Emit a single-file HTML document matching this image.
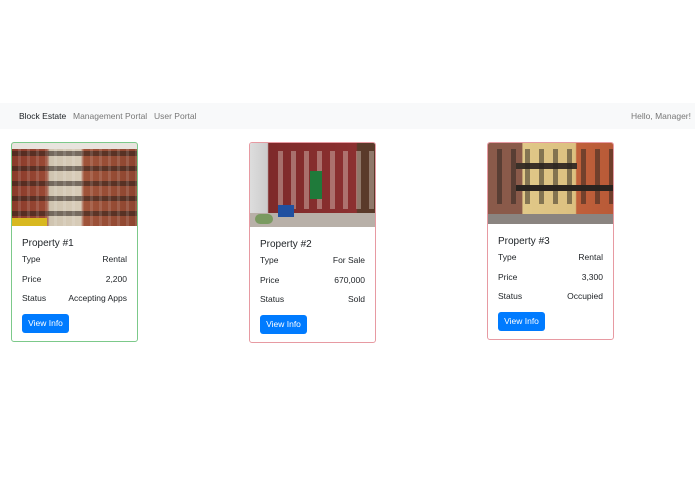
<!DOCTYPE html>
<html><head><style>
*{margin:0;padding:0;box-sizing:border-box}
body{width:695px;height:494px;background:#fff;font-family:"Liberation Sans",sans-serif;position:relative;overflow:hidden;color:#212529}
.nav{position:absolute;top:103px;left:0;width:695px;height:26px;background:#f8f9fa;font-size:8.5px;line-height:26px}
.nav span{position:absolute;top:0}
.card{position:absolute;top:142px;width:127px;border:1px solid;border-radius:3px;background:#fff;overflow:hidden}
.img{height:83px;position:relative;overflow:hidden}
.body{padding:0 10px}
.t{font-size:10px;margin-top:10px;height:14px;line-height:16px}
.r{display:flex;justify-content:space-between;font-size:8.5px;height:19.5px;line-height:19.5px}
.btn{display:inline-block;background:#007bff;color:#fff;font-size:8.5px;border-radius:3px;width:47px;height:19px;line-height:19px;text-align:center;margin:5px 0 8px;vertical-align:top}
</style></head><body>
<div class="nav">
<span style="left:19px;color:#212529">Block Estate</span>
<span style="left:73px;color:#777">Management Portal</span>
<span style="left:154px;color:#777">User Portal</span>
<span style="left:631px;color:#777">Hello, Manager!</span>
</div>

<div class="card" style="left:11px;border-color:#7cc98a">
<div class="img" style="background:linear-gradient(90deg,#8a3a2a 0,#9a4a35 28%,#cfc4b0 30%,#d8ccb8 55%,#a0543a 57%,#8d4530 100%)">
<div style="position:absolute;inset:0;background:repeating-linear-gradient(0deg,transparent 0 10px,rgba(40,30,25,.55) 10px 15px)"></div>
<div style="position:absolute;inset:0;background:repeating-linear-gradient(90deg,transparent 0 6px,rgba(255,255,255,.12) 6px 9px)"></div>
<div style="position:absolute;left:0;bottom:0;width:35px;height:8px;background:#d8b820"></div>
<div style="position:absolute;left:0;top:0;width:125px;height:6px;background:#e8e4de"></div>
</div>
<div class="body">
<div class="t">Property #1</div>
<div class="r"><span>Type</span><span>Rental</span></div>
<div class="r"><span>Price</span><span>2,200</span></div>
<div class="r"><span>Status</span><span>Accepting Apps</span></div>
<div class="btn">View Info</div>
</div></div>

<div class="card" style="left:249px;border-color:#e79aa2">
<div class="img" style="height:84px;background:linear-gradient(90deg,#ddd 0,#ccc 14%,#7e2a2a 15%,#8c3030 85%,#5a3a2a 86%)">
<div style="position:absolute;inset:0 0 18px 20px;background:repeating-linear-gradient(90deg,transparent 0 8px,rgba(230,220,210,.55) 8px 13px);opacity:.7;top:8px"></div>
<div style="position:absolute;left:60px;top:28px;width:12px;height:28px;background:#1f7a3a"></div>
<div style="position:absolute;left:0;bottom:0;width:125px;height:14px;background:#b8b0a8"></div>
<div style="position:absolute;left:28px;bottom:10px;width:16px;height:12px;background:#2050a0"></div>
<div style="position:absolute;left:5px;bottom:3px;width:18px;height:10px;background:#7a9a60;border-radius:5px"></div>
</div>
<div class="body">
<div class="t">Property #2</div>
<div class="r"><span>Type</span><span>For Sale</span></div>
<div class="r"><span>Price</span><span>670,000</span></div>
<div class="r"><span>Status</span><span>Sold</span></div>
<div class="btn">View Info</div>
</div></div>

<div class="card" style="left:487px;border-color:#e79aa2">
<div class="img" style="height:81px;background:linear-gradient(90deg,#8a5a4a 0,#8a5a4a 27%,#e0c888 28%,#dcc080 70%,#c0603a 71%,#b85a38 100%)">
<div style="position:absolute;left:28px;right:36px;top:20px;height:6px;background:#3a3028"></div>
<div style="position:absolute;left:28px;right:0;top:42px;height:6px;background:#2a2420"></div>
<div style="position:absolute;inset:0;top:6px;bottom:20px;background:repeating-linear-gradient(90deg,transparent 0 9px,rgba(40,35,30,.5) 9px 14px)"></div>
<div style="position:absolute;left:0;bottom:0;width:125px;height:10px;background:#8a8480"></div>
</div>
<div class="body">
<div class="t">Property #3</div>
<div class="r"><span>Type</span><span>Rental</span></div>
<div class="r"><span>Price</span><span>3,300</span></div>
<div class="r"><span>Status</span><span>Occupied</span></div>
<div class="btn">View Info</div>
</div></div>
</body></html>
